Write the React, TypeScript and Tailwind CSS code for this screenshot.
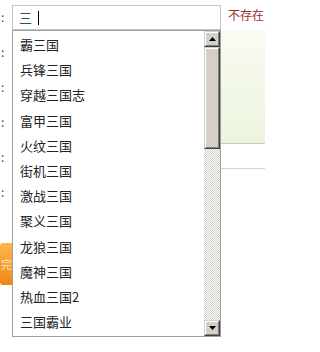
import React from 'react';

const suggestions = [
    '霸三国',
    '兵锋三国',
    '穿越三国志',
    '富甲三国',
    '火纹三国',
    '街机三国',
    '激战三国',
    '聚义三国',
    '龙狼三国',
    '魔神三国',
    '热血三国2',
    '三国霸业',
];

const Bevel: React.FC<{ className?: string; children?: React.ReactNode }> = ({ className = '', children }) => (
    <div className={`border border-t-[#d4d0c8] border-l-[#d4d0c8] border-b-[#404040] border-r-[#404040] ${className}`}>
        <div className="w-full h-full border border-t-white border-l-white border-b-[#808080] border-r-[#808080] bg-[#d4d0c8] flex items-center justify-center">
            {children}
        </div>
    </div>
);

const Arrow: React.FC<{ down?: boolean }> = ({ down }) => (
    <svg width="7" height="4" viewBox="0 0 7 4">
        {down ? <polygon points="0,0 7,0 3.5,4" fill="#000" /> : <polygon points="3.5,0 7,4 0,4" fill="#000" />}
    </svg>
);

const App: React.FC = () => {
    return (
        <div className="relative w-[265px] h-[352px] bg-white overflow-hidden font-['Noto_Sans_CJK_SC','Liberation_Sans',sans-serif] text-[#222]">
            <div className="flex">
                {/* labels column */}
                <div className="w-[12px] shrink-0 pt-[11px] flex flex-col text-[12px] leading-none text-[#444]">
                    {Array.from({ length: 6 }, (_, i) => (
                        <div key={i} className="h-[35px] pl-[1px]">:</div>
                    ))}
                    <div className="mt-[22px] w-[12px] h-[42px] shrink-0 rounded-l-[3px] bg-gradient-to-b from-[#fbb748] to-[#f08810] text-[#fde6c0] text-[11px] leading-[42px] pl-[1px]">
                        完
                    </div>
                </div>

                {/* input column */}
                <div className="w-[209px] shrink-0 pt-[5px]">
                    <div className="h-[25px] border border-[#c4c4c4] flex items-center pl-[6px] text-[13px] text-[#2b5a55]">
                        三
                        <span className="ml-[6px] w-px h-[14px] bg-black" />
                    </div>
                </div>

                {/* hint column */}
                <div className="flex-1 flex flex-col">
                    <div className="h-[30px] pl-[7px] pt-[9px] text-[12px] leading-none text-[#a52a2a] whitespace-nowrap">不存在</div>
                    <div className="h-[114px] bg-gradient-to-b from-[#f8fbf2] to-[#ecf4de] border-b border-[#c8c8c8]" />
                    <div className="h-[25px] border-b border-[#d4d4d4]" />
                </div>
            </div>

            {/* suggestion dropdown */}
            <div className="absolute left-[12px] top-[30px] w-[209px] h-[307px] bg-white border border-[#a0a0a0] flex">
                <ul className="flex-1 pt-[1px]">
                    {suggestions.map((s) => (
                        <li key={s} className="h-[25.2px] pl-[7px] flex items-center text-[13px] leading-none">
                            {s}
                        </li>
                    ))}
                </ul>
                <div className="w-[16px] flex flex-col">
                    <Bevel className="h-[16px] shrink-0">
                        <Arrow />
                    </Bevel>
                    <Bevel className="h-[102px] shrink-0" />
                    <div className="flex-1 bg-[repeating-conic-gradient(#d4d0c8_0%_25%,#ffffff_0%_50%)] bg-size-[2px_2px]" />
                    <Bevel className="h-[16px] shrink-0">
                        <Arrow down />
                    </Bevel>
                </div>
            </div>
        </div>
    );
};

export default App;
